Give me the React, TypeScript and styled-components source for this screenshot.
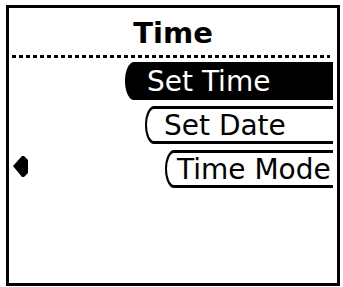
import React from "react"
import styled, { createGlobalStyle } from "styled-components"

const GlobalStyle = createGlobalStyle`
  html, body {
    margin: 0;
    padding: 0;
    background: #ffffff;
  }
  body {
    font-family: "DejaVu Sans", "Liberation Sans", sans-serif;
    -webkit-font-smoothing: none;
  }
`

const Screen = styled.div`
  box-sizing: border-box;
  width: 334px;
  height: 281px;
  margin: 5px 0 0 6px;
  border: 3px solid #000;
  background: #fff;
  display: flex;
  flex-direction: column;
`

const Title = styled.h1`
  margin: 0;
  padding-top: 11px;
  height: 29px;
  line-height: 29px;
  font-size: 29px;
  font-weight: bold;
  text-align: center;
  color: #000;
`

const Dots = styled.div`
  height: 3px;
  margin: 7px 7px 0 3px;
  background: repeating-linear-gradient(
    to right,
    #000 0,
    #000 4px,
    transparent 4px,
    transparent 7px
  );
`

const Menu = styled.div`
  display: flex;
  flex-direction: column;
  gap: 6px;
  margin-top: 4px;
  padding-right: 4px;
`

const Row = styled.div`
  display: flex;
  align-items: center;
  justify-content: flex-end;
  padding-left: 4px;
`

const Item = styled.div<{ $width: number; $selected?: boolean; $inset: number }>`
  box-sizing: border-box;
  width: ${(p) => p.$width}px;
  height: 38px;
  margin-left: auto;
  border-top: 3px solid #000;
  border-bottom: 3px solid #000;
  border-left: ${(p) => (p.$selected ? "3px" : "2px")} solid #000;
  border-radius: 9px 0 0 9px / 19px 0 0 19px;
  background: ${(p) => (p.$selected ? "#000" : "#fff")};
  color: ${(p) => (p.$selected ? "#fff" : "#000")};
  font-size: 28px;
  line-height: 34px;
  padding-left: ${(p) => p.$inset}px;
  white-space: nowrap;
  overflow: hidden;
`

const Arrow = styled.svg`
  display: block;
  width: 15px;
  height: 21px;
  margin-right: auto;
  margin-top: -5px;
`

const items = [
  { label: "Set Time", width: 208, inset: 19, selected: true },
  { label: "Set Date", width: 188, inset: 17 },
  { label: "Time Mode", width: 168, inset: 10, arrow: true },
]

export default function App() {
  return (
    <>
      <GlobalStyle />
      <Screen>
        <Title>Time</Title>
        <Dots />
        <Menu>
          {items.map((it) => (
            <Row key={it.label}>
              {it.arrow && (
                <Arrow viewBox="0 0 15 21">
                  <polygon points="0,10 9,0 11,0 15,4 15,17 11,21 9,21" fill="#000" />
                </Arrow>
              )}
              <Item $width={it.width} $inset={it.inset} $selected={it.selected}>
                {it.label}
              </Item>
            </Row>
          ))}
        </Menu>
      </Screen>
    </>
  )
}
